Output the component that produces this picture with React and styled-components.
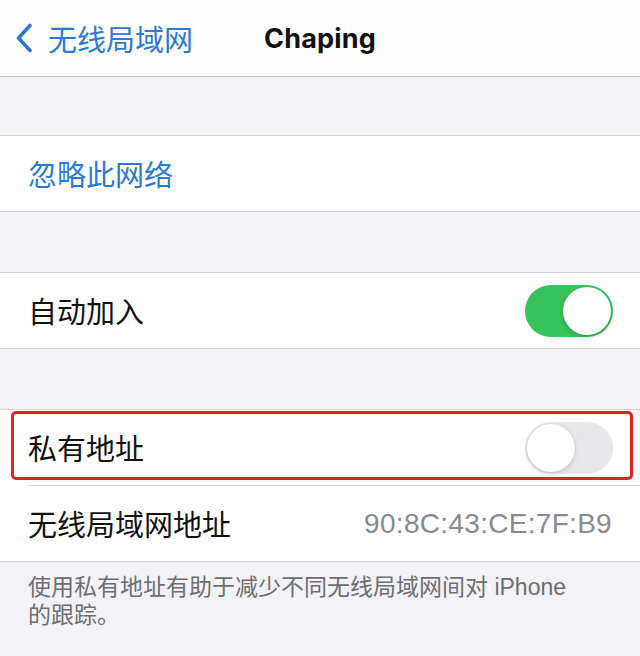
import React, { useState } from 'react';
import styled, { createGlobalStyle } from 'styled-components';

const GlobalStyle = createGlobalStyle`
  html, body {
    margin: 0;
    padding: 0;
    background: #f2f2f7;
  }
  body {
    font-family: "Noto Sans CJK SC", "Noto Sans", sans-serif;
    -webkit-font-smoothing: antialiased;
  }
`;

const Page = styled.div`
  width: 640px;
  height: 656px;
  overflow: hidden;
  background: #f2f2f7;
`;

const NavBar = styled.div`
  position: relative;
  height: 76px;
  background: #fdfdfe;
  border-bottom: 1px solid #c6c6c9;
  display: flex;
  align-items: center;
  justify-content: center;
`;

const BackButton = styled.div`
  position: absolute;
  left: 14px;
  top: 0;
  bottom: 0;
  display: flex;
  align-items: center;
  gap: 14px;
  color: #2b7ad2;
  font-size: 29px;
  line-height: 1;
`;

const NavTitle = styled.div`
  font-family: Inter, "Noto Sans", sans-serif;
  font-weight: 700;
  font-size: 27px;
  color: #111;
  letter-spacing: 0.2px;
`;

const Gap = styled.div`
  height: ${p => p.h}px;
`;

const Group = styled.div`
  background: #fff;
  border-top: 1px solid #d3d3d7;
  border-bottom: 1px solid #d3d3d7;
`;

const Row = styled.div`
  position: relative;
  height: 75px;
  display: flex;
  align-items: center;
  justify-content: space-between;
  padding: 0 28px;
  box-sizing: border-box;
`;

const Divider = styled.div`
  height: 1px;
  margin-left: 28px;
  background: #d3d3d7;
`;

const Label = styled.span`
  font-size: 29px;
  color: ${p => (p.link ? '#2b7ad2' : '#111')};
  margin-top: -2px;
`;

const Detail = styled.span`
  font-family: "Liberation Sans", Arial, sans-serif;
  font-size: 28px;
  letter-spacing: 0.3px;
  color: #8a8a8e;
`;

const Track = styled.div`
  position: relative;
  width: 88px;
  height: 52px;
  margin-right: -1px;
  border-radius: 26px;
  background: ${p => (p.on ? '#37c25a' : '#e8e8ea')};
  transition: background 0.2s;
  cursor: pointer;
`;

const Knob = styled.div`
  position: absolute;
  top: 2px;
  left: ${p => (p.on ? '38px' : '2px')};
  width: 48px;
  height: 48px;
  border-radius: 50%;
  background: #fff;
  box-shadow: 0 2px 5px rgba(0, 0, 0, 0.16), 0 0 1px rgba(0, 0, 0, 0.12);
  transition: left 0.2s;
`;

const Highlight = styled.div`
  position: absolute;
  top: 1px;
  left: 11px;
  right: 7px;
  bottom: 5px;
  border: 3px solid #e3211f;
  border-radius: 5px;
  pointer-events: none;
`;

const Footer = styled.p`
  margin: 0;
  padding: 11px 20px 0 28px;
  font-family: "Liberation Sans", "Noto Sans CJK SC", sans-serif;
  font-size: 23px;
  line-height: 28px;
  color: #6d6d72;
`;

const Chevron = () => (
  <svg width="20" height="30" viewBox="0 0 20 30" fill="none">
    <path
      d="M16 2.5 L4.5 15 L16 27.5"
      stroke="#2b7ad2"
      strokeWidth="3.6"
      strokeLinecap="round"
      strokeLinejoin="round"
    />
  </svg>
);

const Toggle = ({ defaultOn }) => {
  const [on, setOn] = useState(defaultOn);
  return (
    <Track on={on} onClick={() => setOn(!on)}>
      <Knob on={on} />
    </Track>
  );
};

const App = () => (
  <Page>
    <GlobalStyle />
    <NavBar>
      <BackButton>
        <Chevron />
        <span>无线局域网</span>
      </BackButton>
      <NavTitle>Chaping</NavTitle>
    </NavBar>

    <Gap h={58} />
    <Group>
      <Row>
        <Label link>忽略此网络</Label>
      </Row>
    </Group>

    <Gap h={60} />
    <Group>
      <Row>
        <Label>自动加入</Label>
        <Toggle defaultOn />
      </Row>
    </Group>

    <Gap h={60} />
    <Group>
      <Row>
        <Label>私有地址</Label>
        <Toggle defaultOn={false} />
        <Highlight />
      </Row>
      <Divider />
      <Row>
        <Label>无线局域网地址</Label>
        <Detail>90:8C:43:CE:7F:B9</Detail>
      </Row>
    </Group>

    <Footer>
      使用私有地址有助于减少不同无线局域网间对 iPhone
      <br />
      的跟踪。
    </Footer>
  </Page>
);

export default App;
